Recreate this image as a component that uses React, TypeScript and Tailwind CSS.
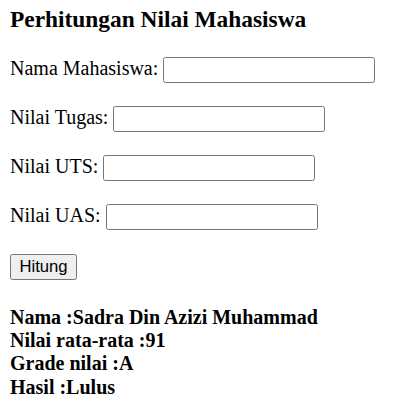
import { useState } from 'react';

const fields = [
  { label: 'Nama Mahasiswa:', mt: 'mt-[24px]' },
  { label: 'Nilai Tugas:', mt: 'mt-[23.3px]' },
  { label: 'Nilai UTS:', mt: 'mt-[23.3px]' },
  { label: 'Nilai UAS:', mt: 'mt-[23.3px]' },
];

const App = () => {
  const [values, setValues] = useState(['', '', '', '']);

  return (
    <div className="min-h-screen bg-white pl-[10px] text-black font-['Liberation_Serif','Times_New_Roman',serif]">
      {/* Judul */}
      <h3 className="pt-[5.6px] text-[23.4px] leading-[27px] font-bold">Perhitungan Nilai Mahasiswa</h3>

      {/* Form */}
      {fields.map((f, i) => (
        <div key={f.label} className={`flex items-baseline gap-[5px] ${f.mt}`}>
          <span className="text-[20px] leading-[23px]">{f.label}</span>
          <input
            type="text"
            value={values[i]}
            onChange={e => {
              const next = [...values];
              next[i] = e.target.value;
              setValues(next);
            }}
            className="w-[212px] h-[26px] px-[2.5px] border border-[#767676] rounded-[2.5px] bg-white text-[16.67px] font-['Liberation_Sans',Arial,sans-serif] outline-none"
          />
        </div>
      ))}

      <button className="mt-[23.5px] block w-[67px] h-[26px] bg-[#efefef] border border-[#767676] rounded-[2.5px] text-[16.67px] leading-none font-['Liberation_Sans',Arial,sans-serif]">
        Hitung
      </button>

      {/* Hasil */}
      <div className="mt-[25.7px] text-[20px] leading-[23.3px] font-bold">
        <div>Nama :Sadra Din Azizi Muhammad</div>
        <div>Nilai rata-rata :91</div>
        <div>Grade nilai :A</div>
        <div>Hasil :Lulus</div>
      </div>
    </div>
  );
};

export default App;
